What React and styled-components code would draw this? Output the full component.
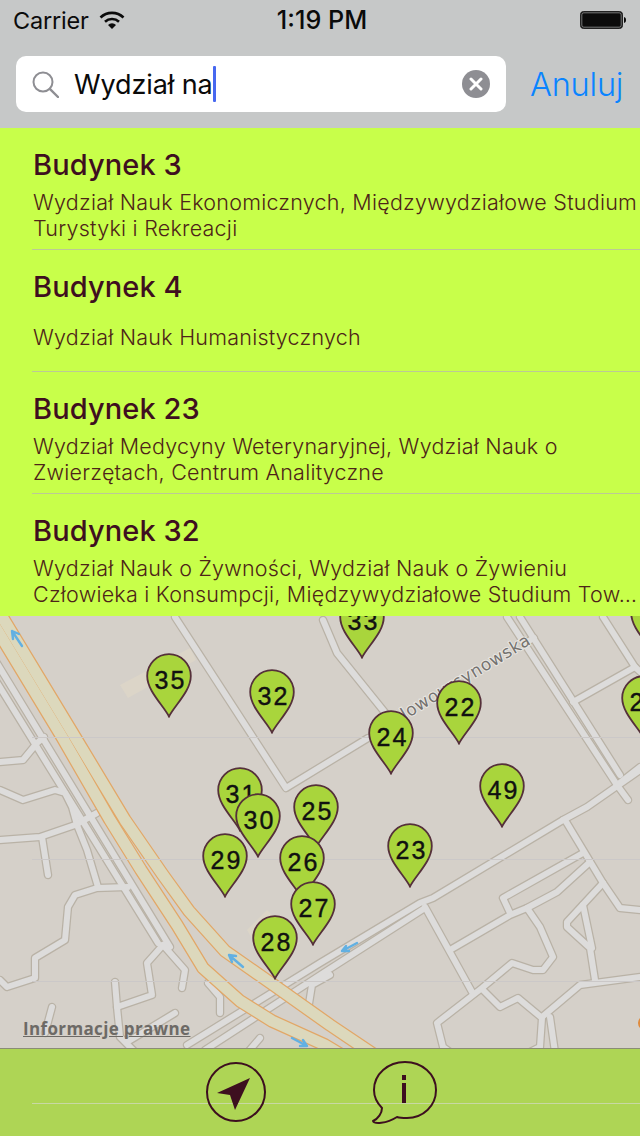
import React from "react";
import styled, { createGlobalStyle } from "styled-components";

const Global = createGlobalStyle`
  html, body { margin: 0; padding: 0; background: #d5d0c9; }
  * { box-sizing: border-box; }
`;

const Screen = styled.div`
  width: 640px; height: 1136px; display: flex; flex-direction: column; overflow: hidden;
  font-family: Inter, "Noto Sans", sans-serif; -webkit-font-smoothing: antialiased;
`;
const Header = styled.header`
  height: 128px; background: #c6c8c8; display: flex; flex-direction: column; flex: none;
  position: relative; z-index: 3;
`;
const StatusBar = styled.div`
  height: 40px; padding: 0 14px 0 13px; display: grid; grid-template-columns: 1fr auto 1fr; align-items: center;
  color: #0b0b0b; font-size: 23.5px; letter-spacing: -0.2px;
`;
const StatusLeft = styled.div`display: flex; align-items: center; gap: 10px;`;
const Clock = styled.div`font-weight: 500; font-size: 25.2px; letter-spacing: 0; margin-left: 5px;`;
const StatusRight = styled.div`display: flex; justify-content: flex-end;`;
const SearchRow = styled.div`
  display: flex; align-items: center; padding: 16px 16px 0; gap: 24px;
`;
const SearchField = styled.div`
  width: 490px; height: 56px; background: #fff; border-radius: 10px; display: flex; align-items: center;
  padding: 0 16px; color: #0a0a0a; font-size: 27px; letter-spacing: -0.1px;
`;
const Query = styled.span`margin-left: 15px; white-space: pre;`;
const Caret = styled.i`display: block; width: 3px; height: 36px; background: #4768f0; border-radius: 1px;`;
const ClearButton = styled.div`
  margin-left: auto; width: 28px; height: 28px; border-radius: 50%; background: #8e8e93;
  display: flex; align-items: center; justify-content: center;
`;
const Cancel = styled.div`color: #0a84ff; font-size: 32.5px; font-weight: 300; letter-spacing: -0.2px;`;

const ResultList = styled.ul`
  list-style: none; margin: 0; padding: 0 0 0 32px; height: 488px; flex: none; background: #c8ff4a;
  position: relative; z-index: 2;
`;
const Row = styled.li`
  height: 122px; padding: 20px 0 0 1px; border-bottom: 1px solid #bcc996;
  &:last-child { border-bottom: none; }
`;
const RowTitle = styled.div`
  font-size: 29px; line-height: 34px; font-weight: 500; color: #3f0f1f; letter-spacing: 0.1px;
`;
const RowBody = styled.div`
  margin: 7px -6px 0 0; height: 52px; display: flex; align-items: center;
  color: #4d2418; font-size: 21.5px; line-height: 26px; font-weight: 300; letter-spacing: 0.24px;
`;

const MapArea = styled.main`
  flex: none; height: 432px; position: relative; background: #d5d0c9; z-index: 1;
`;
const MapDrawing = styled.svg`position: absolute; inset: 0; display: block;`;
const Legal = styled.a`
  position: absolute; left: 23px; top: 401px; color: #6d6a66; font-size: 17px; font-weight: 700;
  text-decoration: underline; font-family: "Open Sans", "Noto Sans", sans-serif; letter-spacing: 0.35px;
`;
const PinBox = styled.div`
  position: absolute; width: 46px; height: 65px; margin-left: -23px;
  left: ${p => p.$x}px; top: ${p => p.$top - 616}px;
`;
const PinShape = styled.svg`display: block;`;
const PinNumber = styled.span`
  position: absolute; left: 3px; right: 0; top: 9.5px; text-align: center; color: #111;
  font-family: "Liberation Sans", sans-serif; font-size: 25px; line-height: 34px; letter-spacing: 2px;
  -webkit-text-stroke: 0.4px #111;
`;
const Toolbar = styled.footer`
  flex: none; height: 88px; background: #aed555; border-top: 1px solid #8a8d75; position: relative; z-index: 2;
  display: flex; align-items: flex-start; padding: 12px 0 0 205px;
  &::after { content: ""; position: absolute; left: 32px; right: 0; top: 54px; height: 1px; background: #c8d8a4; }
`;
const ToolIcon = styled.svg`display: block; flex: none; position: relative; z-index: 1; margin-right: ${p => p.$gap || 0}px;`;

const rows = [
  ["Budynek 3", "Wydział Nauk Ekonomicznych, Międzywydziałowe Studium Turystyki i Rekreacji"],
  ["Budynek 4", "Wydział Nauk Humanistycznych"],
  ["Budynek 23", "Wydział Medycyny Weterynaryjnej, Wydział Nauk o Zwierzętach, Centrum Analityczne"],
  ["Budynek 32", "Wydział Nauk o Żywności, Wydział Nauk o Żywieniu Człowieka i Konsumpcji, Międzywydziałowe Studium Tow…"],
];

const pins = [
  ["35", 169, 653], ["32", 272, 669], ["33", 362, 594], ["", 653, 590], ["22", 459, 680], ["24", 391, 710],
  ["21", 644, 675], ["49", 502, 763], ["31", 240, 767], ["25", 316, 784], ["30", 258, 793], ["29", 225, 833],
  ["26", 302, 835], ["27", 313, 881], ["28", 275, 915], ["23", 410, 823],
];

const roads = [
  "M175 617L286 788L368 738",
  "M323 620L337 653L395 725",
  "M-8 655L170 947",
  "M-12 668L158 943",
  "M0 762L23 760L37 743L44 737",
  "M0 790L23 800L55 790L65 793L72 807L77 825L87 850L98 887",
  "M0 840L40 837L75 825L97 813",
  "M42 837L48 875",
  "M128 887L97 888L75 895L68 907L65 940L35 958L35 978L7 987L0 980",
  "M163 945L147 963L152 995L117 1007L115 982",
  "M117 1007L120 1037L135 1052",
  "M163 945L185 970L182 988",
  "M52 1007L45 1033",
  "M175 1013L127 1042",
  "M208 983L220 997L220 1013",
  "M260 1038L248 1052",
  "M330 975L312 985L308 1010",
  "M563 820L433 898L420 903L320 963L187 1045",
  "M425 908L325 972L205 1050",
  "M640 770L587 807L563 820",
  "M507 617L617 785L628 800",
  "M520 617L620 775",
  "M527 642L534 638",
  "M573 702L635 667L603 617",
  "M635 667L660 690",
  "M617 785L640 767",
  "M565 820L603 883L620 908L640 910",
  "M583 853L503 898L510 913",
  "M590 862L557 892L527 908L510 915L450 950",
  "M425 907L472 992",
  "M527 908L540 927L553 957L543 970L533 970L512 963L482 988L437 1023L443 1047L450 1052",
  "M483 990L500 1007L518 998L542 1018L540 1047L530 1052",
  "M603 883L567 922L567 927L590 948L595 980",
  "M583 905L592 948",
  "M640 977L580 985L542 1017",
  "M550 1017L555 1052",
];

const highwayRight = "M-2 610L75 737L125 820L163 875L189 911L225 951L275 986L330 1025L385 1062";
const highwayLeft = "M-15 610L62 737L110 820L141 870L177 925L203 968L240 1001L272 1021L325 1045L350 1060";

const arrows = [
  "M22 646L12 631M12 631L13 639M12 631L19 634",
  "M243 967L229 955M229 955L236 956M229 955L232 962",
  "M292 1038L307 1046M307 1046L300 1046M307 1046L303 1040",
  "M357 943L342 951M342 951L349 951M342 951L346 946",
];

const Pin = ({ n, x, top }) => (
  <PinBox $x={x} $top={top}>
    <PinShape width="46" height="65" viewBox="0 0 46 65">
      <path d="M23 63.5C17 52 1.2 38 1.2 23A21.8 21.8 0 0 1 44.8 23C44.8 38 29 52 23 63.5Z" fill="#a9d53c" stroke="#55303a" strokeWidth="1.8" />
    </PinShape>
    {n && <PinNumber>{n}</PinNumber>}
  </PinBox>
);

export default function App() {
  return (
    <Screen>
      <Global />
      <Header>
        <StatusBar>
          <StatusLeft>
            <span>Carrier</span>
            <svg width="26" height="18" viewBox="0 0 26 18">
              <path d="M1.5 6.5A16.5 16.5 0 0 1 24.5 6.5" fill="none" stroke="#0b0b0b" strokeWidth="2.6" />
              <path d="M6 10.8A10.3 10.3 0 0 1 20 10.8" fill="none" stroke="#0b0b0b" strokeWidth="2.6" />
              <path d="M9 14L13 18L17 14A5.6 5.6 0 0 0 9 14Z" fill="#0b0b0b" />
            </svg>
          </StatusLeft>
          <Clock>1:19 PM</Clock>
          <StatusRight>
            <svg width="46" height="18" viewBox="0 0 46 18">
              <rect x="0.5" y="0.5" width="42" height="17" rx="3" fill="#0b0b0b" stroke="#222" />
              <rect x="1.8" y="1.8" width="39.4" height="14.4" rx="2" fill="#0b0b0b" stroke="#c6c8c8" strokeWidth="0.6" />
              <path d="M44 6C45.5 6.3 46 7.5 46 9S45.5 11.7 44 12Z" fill="#0b0b0b" />
            </svg>
          </StatusRight>
        </StatusBar>
        <SearchRow>
          <SearchField>
            <svg width="27" height="27" viewBox="0 0 27 27">
              <circle cx="11" cy="11" r="9.5" fill="none" stroke="#8e8e93" strokeWidth="2" />
              <path d="M17.8 17.8L26 26" stroke="#8e8e93" strokeWidth="2.4" strokeLinecap="round" />
            </svg>
            <Query>Wydział na</Query>
            <Caret />
            <ClearButton>
              <svg width="14" height="14" viewBox="0 0 14 14">
                <path d="M2 2L12 12M12 2L2 12" stroke="#fff" strokeWidth="3" strokeLinecap="round" />
              </svg>
            </ClearButton>
          </SearchField>
          <Cancel>Anuluj</Cancel>
        </SearchRow>
      </Header>

      <ResultList>
        {rows.map(([title, body]) => (
          <Row key={title}>
            <RowTitle>{title}</RowTitle>
            <RowBody><span>{body}</span></RowBody>
          </Row>
        ))}
      </ResultList>

      <MapArea>
        <MapDrawing width="640" height="432" viewBox="0 616 640 432">
          <path d="M120 685L190 648L196 660L128 698Z" fill="#dcd5c8" />
          <path d="M247 930L267 910L300 943L283 953L262 955Z" fill="#dcd5c8" />
          <g fill="none" strokeLinejoin="round" strokeLinecap="round">
            {roads.map(d => <path key={d} d={d} stroke="#b9b2a6" strokeWidth="8.5" />)}
            {roads.map(d => <path key={d} d={d} stroke="#dddcdb" strokeWidth="6" />)}
            <path d={highwayRight} stroke="#e2a767" strokeWidth="13.5" />
            <path d={highwayLeft} stroke="#e2a767" strokeWidth="13.5" />
            <path d={highwayRight} stroke="#dcd8bc" strokeWidth="11" />
            <path d={highwayLeft} stroke="#dcd8bc" strokeWidth="11" />
            {arrows.map(d => <path key={d} d={d} stroke="#62b0e2" strokeWidth="2.4" />)}
          </g>
          <circle cx="645" cy="1023" r="7" fill="#e08a3c" />
          <g stroke="#cbc8c8" strokeWidth="1">
            <path d="M32 737.5H640" />
            <path d="M32 859.5H640" />
            <path d="M32 981.5H640" />
          </g>
          <text
            x="398" y="724" transform="rotate(-31 398 724)" fontFamily="'DejaVu Sans', sans-serif" fontSize="17"
            fill="#75726f" stroke="#e8e6e2" strokeWidth="2" paintOrder="stroke" letterSpacing="0.6"
          >
            Nowoursynowska
          </text>
        </MapDrawing>
        {pins.map(([n, x, top]) => <Pin key={x} n={n} x={x} top={top} />)}
        <Legal>Informacje prawne</Legal>
      </MapArea>

      <Toolbar>
        <ToolIcon $gap={104} width="62" height="62" viewBox="0 0 62 62">
          <circle cx="31" cy="31" r="29" fill="none" stroke="#3d0f1f" strokeWidth="2" />
          <path d="M45 17L12 32L25 34L30 49Z" fill="#3d0f1f" />
        </ToolIcon>
        <ToolIcon width="68" height="66" viewBox="0 0 68 66">
          <path d="M34 1C17 1 3 13 3 29C3 38 8 44 11 47C11 52 7 58 2 60C3 63 15 63 26 56C29 57 31 57 36 57C52 57 65 45 65 29C65 13 51 1 34 1Z" fill="none" stroke="#3d0f1f" strokeWidth="2" strokeLinejoin="round" />
          <rect x="31" y="14" width="4" height="5" fill="#3d0f1f" />
          <rect x="31" y="22" width="4" height="20" fill="#3d0f1f" />
        </ToolIcon>
      </Toolbar>
    </Screen>
  );
}
